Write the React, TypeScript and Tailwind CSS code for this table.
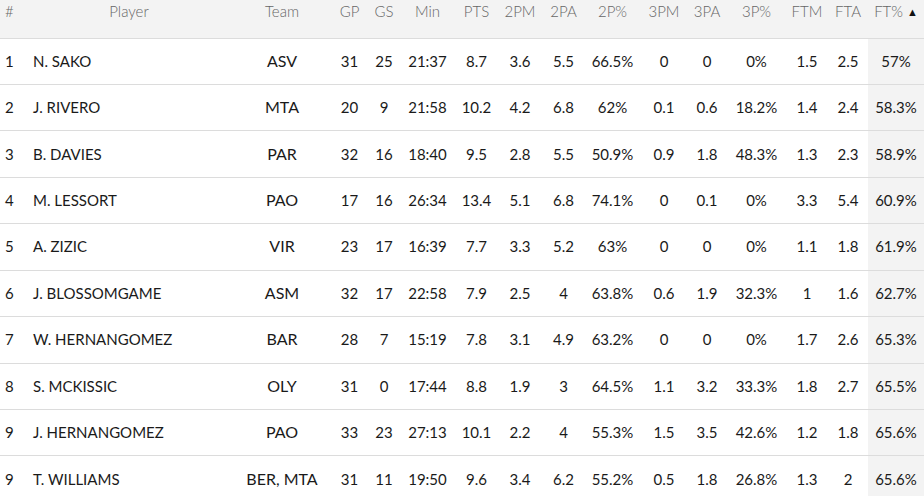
const columns = [
  { label: "#", width: "w-[24px]" },
  { label: "Player", width: "w-[210px]" },
  { label: "Team", width: "w-[96px]" },
  { label: "GP", width: "w-[39px]" },
  { label: "GS", width: "w-[30px]" },
  { label: "Min", width: "w-[57px]" },
  { label: "PTS", width: "w-[41px]" },
  { label: "2PM", width: "w-[46px]" },
  { label: "2PA", width: "w-[41px]" },
  { label: "2P%", width: "w-[57px]" },
  { label: "3PM", width: "w-[46px]" },
  { label: "3PA", width: "w-[40px]" },
  { label: "3P%", width: "w-[59px]" },
  { label: "FTM", width: "w-[42px]" },
  { label: "FTA", width: "w-[40px]" },
  { label: "FT%", width: "w-[56px]" },
];

const rows: string[][] = [
  ["1", "N. SAKO", "ASV", "31", "25", "21:37", "8.7", "3.6", "5.5", "66.5%", "0", "0", "0%", "1.5", "2.5", "57%"],
  ["2", "J. RIVERO", "MTA", "20", "9", "21:58", "10.2", "4.2", "6.8", "62%", "0.1", "0.6", "18.2%", "1.4", "2.4", "58.3%"],
  ["3", "B. DAVIES", "PAR", "32", "16", "18:40", "9.5", "2.8", "5.5", "50.9%", "0.9", "1.8", "48.3%", "1.3", "2.3", "58.9%"],
  ["4", "M. LESSORT", "PAO", "17", "16", "26:34", "13.4", "5.1", "6.8", "74.1%", "0", "0.1", "0%", "3.3", "5.4", "60.9%"],
  ["5", "A. ZIZIC", "VIR", "23", "17", "16:39", "7.7", "3.3", "5.2", "63%", "0", "0", "0%", "1.1", "1.8", "61.9%"],
  ["6", "J. BLOSSOMGAME", "ASM", "32", "17", "22:58", "7.9", "2.5", "4", "63.8%", "0.6", "1.9", "32.3%", "1", "1.6", "62.7%"],
  ["7", "W. HERNANGOMEZ", "BAR", "28", "7", "15:19", "7.8", "3.1", "4.9", "63.2%", "0", "0", "0%", "1.7", "2.6", "65.3%"],
  ["8", "S. MCKISSIC", "OLY", "31", "0", "17:44", "8.8", "1.9", "3", "64.5%", "1.1", "3.2", "33.3%", "1.8", "2.7", "65.5%"],
  ["9", "J. HERNANGOMEZ", "PAO", "33", "23", "27:13", "10.1", "2.2", "4", "55.3%", "1.5", "3.5", "42.6%", "1.2", "1.8", "65.6%"],
  ["9", "T. WILLIAMS", "BER, MTA", "31", "11", "19:50", "9.6", "3.4", "6.2", "55.2%", "0.5", "1.8", "26.8%", "1.3", "2", "65.6%"],
];

export default function App() {
  return (
    <div className="h-[496px] w-[924px] overflow-hidden bg-white font-['Lato',sans-serif] text-[#1a1a1a]">
      <table className="w-[924px] table-fixed border-collapse">
        <colgroup>
          {columns.map((c) => (
            <col key={c.label} className={c.width} />
          ))}
        </colgroup>
        <thead>
          <tr className="border-b border-[#dcdcdc] bg-[#f3f3f3]">
            {columns.map((c, i) => (
              <th
                key={c.label}
                className={`h-[38px] whitespace-nowrap p-0 pt-[1px] align-top text-[15px] font-light leading-[20px] text-[#666] ${
                  i === 0 ? "pl-[5px] text-left" : "text-center"
                }`}
              >
                {c.label}
                {c.label === "FT%" && <span className="ml-[4px] align-[1px] text-[11px] text-[#111]">▲</span>}
              </th>
            ))}
          </tr>
        </thead>
        <tbody>
          {rows.map((r, ri) => (
            <tr key={ri} className="border-b border-[#dcdcdc]">
              {r.map((v, i) => (
                <td
                  key={i}
                  className={`h-[46.45px] whitespace-nowrap p-0 pb-[1px] text-[15px] leading-[20px] ${
                    i === 0
                      ? "pl-[5px] text-left"
                      : i === 1
                        ? "pl-[9px] text-left"
                        : i === 2
                          ? "text-center text-[16px]"
                          : "text-center"
                  } ${i === 15 ? "bg-[#f3f3f3]" : ""}`}
                >
                  {v}
                </td>
              ))}
            </tr>
          ))}
        </tbody>
      </table>
    </div>
  );
}
